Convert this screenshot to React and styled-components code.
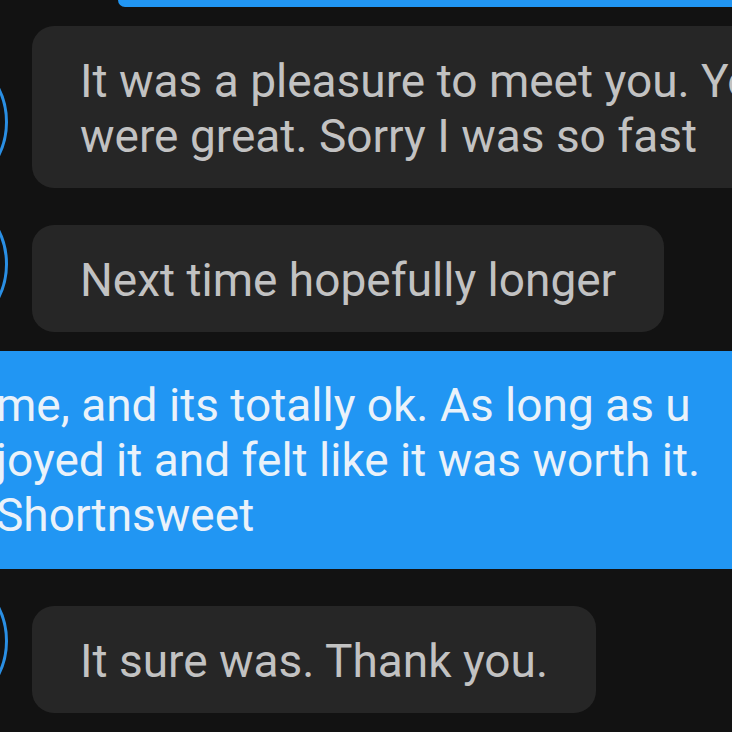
import React from "react";
import styled, { createGlobalStyle } from "styled-components";

const GlobalStyle = createGlobalStyle`
  html, body {
    margin: 0;
    padding: 0;
    background: #121212;
  }
  * { box-sizing: border-box; }
`;

const Screen = styled.div`
  width: 732px;
  height: 732px;
  overflow: hidden;
  background: #121212;
  display: flex;
  flex-direction: column;
  font-family: Roboto, "Noto Sans", "Liberation Sans", sans-serif;
  font-size: 46px;
  line-height: 55px;
`;

const SentBubble = styled.div`
  flex-shrink: 0;
  align-self: flex-start;
  background: #2196f3;
  color: #eaf2fa;
  white-space: nowrap;
  margin-top: ${(p) => p.$top || 0}px;
  margin-left: ${(p) => p.$left || 0}px;
  width: ${(p) => (p.$width ? `${p.$width}px` : "auto")};
  height: ${(p) => (p.$height ? `${p.$height}px` : "auto")};
  padding: ${(p) => (p.$height ? "0" : "27px 48px 26px")};
  border-radius: ${(p) => (p.$height ? "0 0 0 22px" : "22px")};
`;

const Line = styled.span`
  display: block;
`;

const Row = styled.div`
  display: flex;
  align-items: flex-end;
  flex-shrink: 0;
  margin-top: ${(p) => p.$top || 0}px;
`;

const Avatar = styled.div`
  flex-shrink: 0;
  width: 150px;
  height: 150px;
  border-radius: 50%;
  border: 3px solid #2a8fe4;
  background: #121212;
  margin: -120px 24px -${(p) => p.$drop || 9}px -142px;
`;

const Bubble = styled.div`
  flex-shrink: 0;
  background: #262626;
  color: #c2c2c2;
  border-radius: 22px;
  padding: 28px 48px 24px;
  white-space: nowrap;
`;

export default function App() {
  return (
    <>
      <GlobalStyle />
      <Screen>
        <SentBubble $left={118} $width={660} $height={7} />
        <Row $top={19}>
          <Avatar $drop={9} />
          <Bubble>
            <Line>It was a pleasure to meet you. You</Line>
            <Line>were great. Sorry I was so fast</Line>
          </Bubble>
        </Row>
        <Row $top={37}>
          <Avatar $drop={7} />
          <Bubble>
            <Line>Next time hopefully longer</Line>
          </Bubble>
        </Row>
        <SentBubble $top={19} $left={-52} $width={840}>
          <Line>me, and its totally ok. As long as u</Line>
          <Line>joyed it and felt like it was worth it.</Line>
          <Line>Shortnsweet</Line>
        </SentBubble>
        <Row $top={37}>
          <Avatar $drop={3} />
          <Bubble>
            <Line>It sure was. Thank you.</Line>
          </Bubble>
        </Row>
      </Screen>
    </>
  );
}
